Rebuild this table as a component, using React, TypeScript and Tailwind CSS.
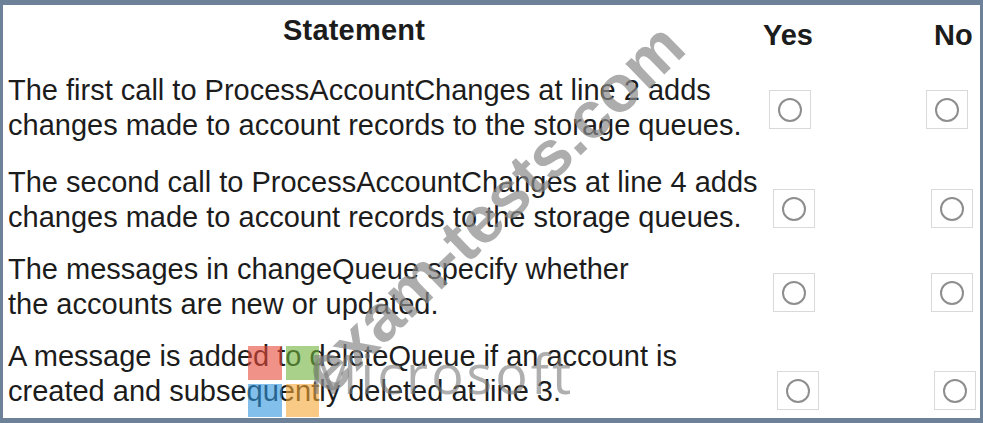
import React from "react";

type Row = {
  lines: string[];
  rowClass: string;
  boxTop: string;
  yesMl: string;
  noMl: string;
};

const rows: Row[] = [
  {
    lines: [
      "The first call to ProcessAccountChanges at line 2 adds",
      "changes made to account records to the storage queues.",
    ],
    rowClass: "mt-0",
    boxTop: "mt-[17px]",
    yesMl: "ml-[9px]",
    noMl: "ml-[115px]",
  },
  {
    lines: [
      "The second call to ProcessAccountChanges at line 4 adds",
      "changes made to account records to the storage queues.",
    ],
    rowClass: "mt-[22px]",
    boxTop: "mt-[24px]",
    yesMl: "ml-[13px]",
    noMl: "ml-[116px]",
  },
  {
    lines: [
      "The messages in changeQueue specify whether",
      "the accounts are new or updated.",
    ],
    rowClass: "mt-[17px]",
    boxTop: "mt-[21px]",
    yesMl: "ml-[13px]",
    noMl: "ml-[116px]",
  },
  {
    lines: [
      "A message is added to deleteQueue if an account is",
      "created and subsequently deleted at line 3.",
    ],
    rowClass: "mt-[17px]",
    boxTop: "mt-[32px]",
    yesMl: "ml-[17px]",
    noMl: "ml-[115px]",
  },
];

function RadioBox({ className }: { className: string }) {
  return (
    <div
      className={
        "w-[42px] h-[39px] shrink-0 border border-[#d9d9d9] bg-white flex items-center justify-center " +
        className
      }
    >
      <div className="w-[24px] h-[24px] rounded-full border-2 border-[#8e8e8e]" />
    </div>
  );
}

export default function App() {
  return (
    <div
      className="relative w-[983px] h-[423px] overflow-hidden bg-white border-solid border-t-[5px] border-b-[5px] border-l-[3px] border-r-[3px] border-[#6d8299] text-[#1c1c1c]"
      style={{ fontFamily: '"Liberation Sans", Arial, sans-serif' }}
    >
      {/* Header */}
      <div className="flex h-[68px] items-start font-bold text-[29px] leading-[29px]">
        <div className="ml-[280px] mt-[11px] tracking-[0.2px]">Statement</div>
        <div className="ml-[338px] mt-[16px]">Yes</div>
        <div className="ml-[121px] mt-[16px]">No</div>
      </div>

      {/* Rows */}
      {rows.map((r, i) => (
        <div key={i} className={"flex items-start " + r.rowClass}>
          <div className="w-[757px] shrink-0 pl-[5px] text-[29px] leading-[35px] whitespace-nowrap">
            {r.lines.map((l, j) => (
              <div key={j}>{l}</div>
            ))}
          </div>
          <RadioBox className={r.boxTop + " " + r.yesMl} />
          <RadioBox className={r.boxTop + " " + r.noMl} />
        </div>
      ))}

      {/* Watermark: diagonal site text */}
      <div className="pointer-events-none absolute left-[490px] top-[203px] -translate-x-1/2 -translate-y-1/2 -rotate-[44deg] whitespace-nowrap font-bold text-[66px] leading-none text-[#8a8a8a]/70">
        exam-tests.com
      </div>

      {/* Watermark: Microsoft logo */}
      <div className="pointer-events-none absolute left-[245px] top-[341px] grid grid-cols-[34px_33px] grid-rows-[34px_33px] gap-[4px]">
        <div className="bg-[#e8493b]/60" />
        <div className="bg-[#6fb33c]/60" />
        <div className="bg-[#2f95dc]/60" />
        <div className="bg-[#f5a733]/60" />
      </div>
      <div
        className="pointer-events-none absolute left-[306px] top-[341px] text-[54px] leading-none tracking-[3px] text-[#7a7a7a]/60"
        style={{ fontFamily: '"Open Sans", "Liberation Sans", sans-serif' }}
      >
        Microsoft
      </div>
    </div>
  );
}
